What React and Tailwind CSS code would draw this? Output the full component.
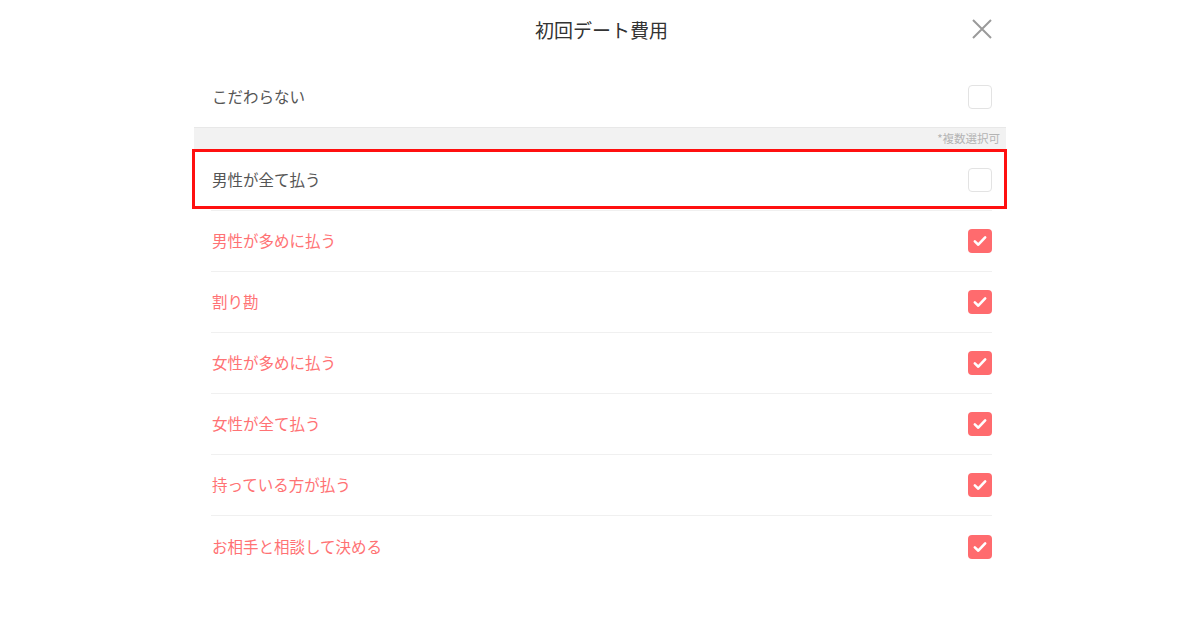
import React from "react";

const font = { fontFamily: '"Noto Sans CJK JP", "Noto Sans", sans-serif' };

function Box({ checked }) {
  if (checked) {
    return (
      <div className="w-6 h-6 rounded-[4px] bg-[#ff6b6e] flex items-center justify-center">
        <svg width="18" height="18" viewBox="0 0 16 16" fill="none">
          <path d="M3.4 8.3 L6.5 11.3 L12.6 4.8" stroke="white" strokeWidth="2.3" strokeLinecap="round" strokeLinejoin="round" />
        </svg>
      </div>
    );
  }
  return <div className="w-6 h-6 rounded-[4px] border border-[#e3e3e3] bg-white" />;
}

const items = [
  { label: "男性が全て払う", checked: false, highlight: true },
  { label: "男性が多めに払う", checked: true },
  { label: "割り勘", checked: true },
  { label: "女性が多めに払う", checked: true },
  { label: "女性が全て払う", checked: true },
  { label: "持っている方が払う", checked: true },
  { label: "お相手と相談して決める", checked: true, last: true },
];

export default function App() {
  return (
    <div className="w-[1200px] h-[630px] bg-white overflow-hidden" style={font}>
      <div className="w-[812px] mx-auto">
        <div className="relative h-[60px] flex items-center justify-center">
          <span className="text-[19px] text-[#333] pl-[3px]">初回デート費用</span>
          <svg className="absolute right-[14px] top-[19px]" width="20" height="20" viewBox="0 0 20 20">
            <path d="M1 1 L19 19 M19 1 L1 19" stroke="#9a9a9a" strokeWidth="2" />
          </svg>
        </div>
        <div className="mt-[6px] h-[61px] ml-[17px] mr-[14px] flex items-center justify-between">
          <span className="pl-px text-[15.5px] text-[#555]">こだわらない</span>
          <Box checked={false} />
        </div>
        <div className="h-[23px] bg-[#f2f2f2] border-t border-[#e8e8e8] flex items-center justify-end pr-[6px]">
          <span className="text-[11.5px] text-[#b4b4b4]">*複数選択可</span>
        </div>
        {items.map((it, i) => (
          <div key={it.label} className="relative">
            <div className={`${i === 0 ? "h-[61px]" : "h-[61px]"} ml-[17px] mr-[14px] flex items-center justify-between ${it.last ? "" : "border-b border-[#f0f0f0]"}`}>
              <span className={`pl-px text-[15.5px] ${it.checked ? "text-[#ff7274]" : "text-[#555]"}`}>{it.label}</span>
              <Box checked={it.checked} />
            </div>
            {it.highlight && (
              <div className="absolute left-[-2px] right-[-1px] top-[-1px] bottom-[2px] border-[3px] border-[#ff1010] pointer-events-none" />
            )}
          </div>
        ))}
      </div>
    </div>
  );
}
